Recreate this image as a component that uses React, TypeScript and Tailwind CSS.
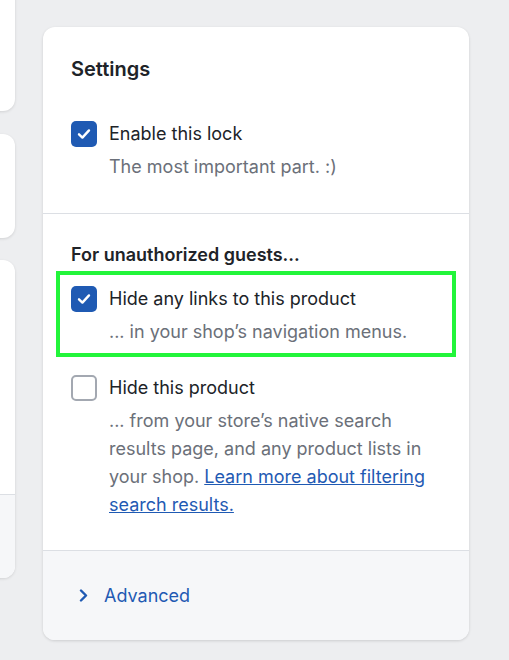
import React, { useState } from 'react';

const font = { fontFamily: 'Inter, "Noto Sans", "Liberation Sans", sans-serif' };

interface CheckProps {
  checked: boolean;
  onToggle: () => void;
}

const Check = ({ checked, onToggle }: CheckProps) => (
  <button
    onClick={onToggle}
    className={`w-[26px] h-[26px] shrink-0 rounded-[5px] flex items-center justify-center ${
      checked ? 'bg-[#1f5ab3]' : 'bg-white border-2 border-[#a3a8b1]'
    }`}
  >
    {checked && (
      <svg width="14" height="12" viewBox="0 0 14 12" fill="none">
        <path d="M2 6.3l3.4 3.3L12 2.4" stroke="white" strokeWidth="2.4" strokeLinecap="round" strokeLinejoin="round" />
      </svg>
    )}
  </button>
);

interface OptionProps {
  label: string;
  checked: boolean;
  onToggle: () => void;
  children: React.ReactNode;
}

const Option = ({ label, checked, onToggle, children }: OptionProps) => (
  <div className="flex gap-[12px]">
    <Check checked={checked} onToggle={onToggle} />
    <div className="flex-1">
      <p className="text-[18px] leading-[26px] text-[#202328]">{label}</p>
      <p className="mt-1.5 text-[18px] leading-[28px] text-[#6b7079]">{children}</p>
    </div>
  </div>
);

const App = () => {
  const [enabled, setEnabled] = useState(true);
  const [hideLinks, setHideLinks] = useState(true);
  const [hideProduct, setHideProduct] = useState(false);

  return (
    <div className="w-[509px] h-[660px] overflow-hidden bg-[#edeef0] flex pt-[27px]" style={font}>
      {/* cards in the column on the left, mostly off screen */}
      <div className="w-[215px] shrink-0 -ml-[200px] -mt-[60px] flex flex-col gap-[23px]">
        <div className="h-[144px] bg-white rounded-xl shadow-[0_1px_3px_rgba(0,0,0,0.12)]" />
        <div className="h-[104px] bg-white rounded-xl shadow-[0_1px_3px_rgba(0,0,0,0.12)]" />
        <div className="h-[318px] mt-[-1px] bg-white rounded-xl overflow-hidden shadow-[0_1px_3px_rgba(0,0,0,0.12)] flex flex-col">
          <div className="h-[234px]" />
          <div className="flex-1 bg-[#f6f7f9] border-t border-[#dcdfe4]" />
        </div>
      </div>

      <div className="ml-[28px] w-[426px] h-[613px] shrink-0 bg-white rounded-xl overflow-hidden shadow-[0_1px_3px_rgba(0,0,0,0.14)] flex flex-col">
        <div className="px-[28px] pt-7 pb-8">
          <h2 className="text-[20px] leading-[28px] font-semibold text-[#202328]">Settings</h2>
          <div className="mt-[38px]">
            <Option label="Enable this lock" checked={enabled} onToggle={() => setEnabled(!enabled)}>
              The most important part. :)
            </Option>
          </div>
        </div>

        <div className="border-t border-[#dcdfe4] px-[28px] pt-7 pb-[31px]">
          <h3 className="text-[18px] leading-[26px] font-semibold text-[#202328]">For unauthorized guests...</h3>
          <div className="mt-[3px] -mx-[15px] border-4 border-[#22f53a] px-[11px] pt-[11px] pb-[7px]">
            <Option label="Hide any links to this product" checked={hideLinks} onToggle={() => setHideLinks(!hideLinks)}>
              ... in your shop’s navigation menus.
            </Option>
          </div>
          <div className="mt-[18px]">
            <Option label="Hide this product" checked={hideProduct} onToggle={() => setHideProduct(!hideProduct)}>
              ... from your store’s native search results page, and any product lists in your shop.{' '}
              <a href="#" className="text-[#1f5ab3] underline">Learn more about filtering search results.</a>
            </Option>
          </div>
        </div>

        <div className="flex-1 border-t border-[#dcdfe4] bg-[#f6f7f9] px-[36px] flex items-center gap-[16px]">
          <svg width="9" height="13" viewBox="0 0 9 13" fill="none">
            <path d="M2 1.5l5 5-5 5" stroke="#1f5ab3" strokeWidth="2.4" strokeLinecap="round" strokeLinejoin="round" />
          </svg>
          <span className="text-[18px] leading-[26px] text-[#1f5ab3]">Advanced</span>
        </div>
      </div>
    </div>
  );
};

export default App;
